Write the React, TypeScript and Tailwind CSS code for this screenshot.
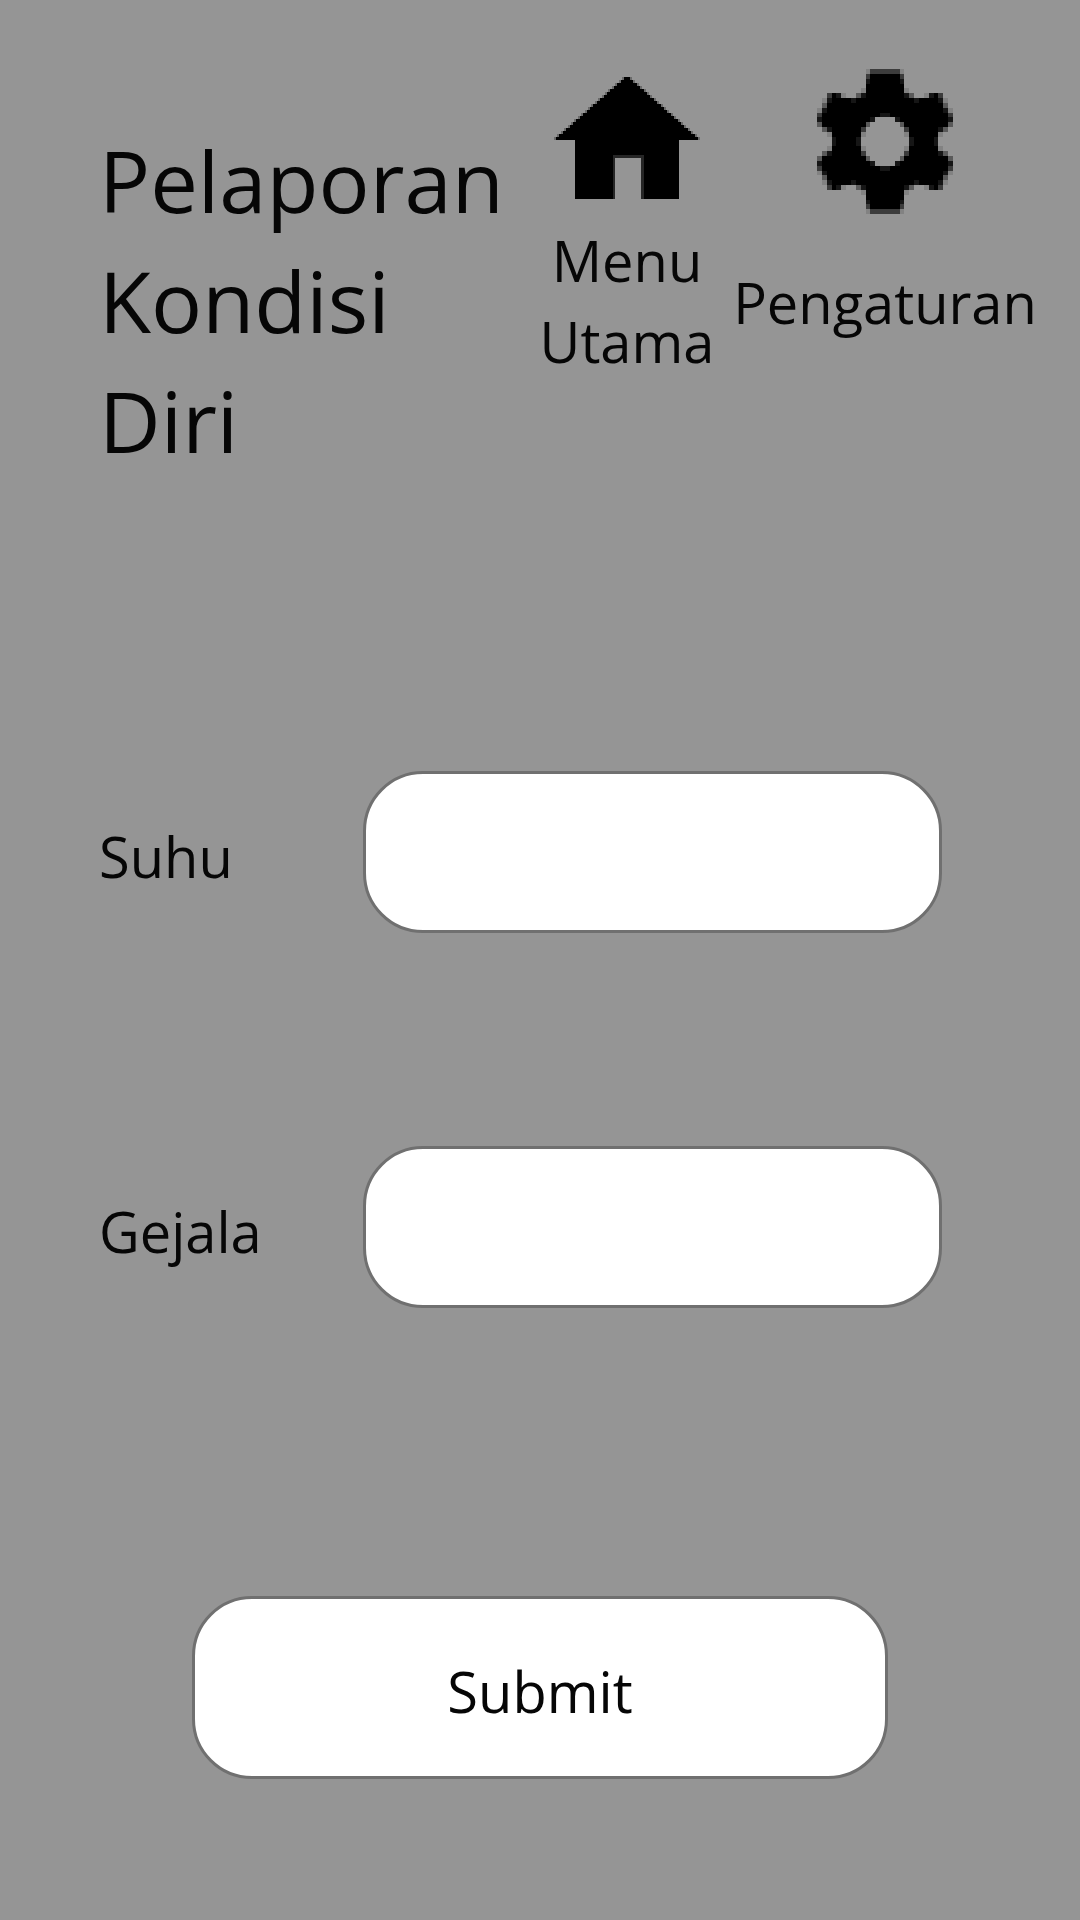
import React from "react";

// Upper-left quarter of the gear; it is mirrored across both axes.
const GEAR_QUARTER = [
  "..........lmmm",
  "..........m###",
  "..........d###",
  "..........####",
  ".........l####",
  "..m#dl..gd####",
  ".ld####d######",
  ".g############",
  "ld############",
  "m############d",
  "d##########d..",
  "g#########g...",
  ".gd######m....",
  "..l######l....",
  "...d####d.....",
];

const SHADES: Record<string, string> = {
  "#": "#000000",
  d: "#161616",
  m: "#3c3c3c",
  g: "#5a5a5a",
  l: "#828282",
};

const gearTop = GEAR_QUARTER.map((row) => row + row.split("").reverse().join(""));
const GEAR = [...gearTop, ...gearTop.slice().reverse()];

function GearIcon() {
  return (
    <svg
      viewBox="0 0 28 30"
      preserveAspectRatio="none"
      shapeRendering="crispEdges"
      className="h-[145px] w-[136px]"
      aria-hidden="true"
    >
      {GEAR.flatMap((row, y) =>
        row.split("").map((c, x) =>
          c === "." ? null : <rect key={`${x}-${y}`} x={x} y={y} width={1} height={1} fill={SHADES[c]} />,
        ),
      )}
    </svg>
  );
}

function HomeIcon() {
  const rows = Array.from({ length: 21 }, (_, i) => i);
  return (
    <svg viewBox="0 0 148 126" shapeRendering="crispEdges" className="h-[126px] w-[148px]" aria-hidden="true">
      {rows.map((i) => {
        const half = Math.round(3 + i * 3.4);
        return (
          <g key={i}>
            <rect x={72 - half} y={4 + i * 3} width={(half + 2) * 2} height={3} fill="#6a6a6a" />
            <rect x={74 - half} y={4 + i * 3} width={half * 2} height={3} fill="#000000" />
          </g>
        );
      })}
      <path d="M22 66H126V126H90V83H61V126H22Z" fill="#000000" />
      <path d="M60 126V82H91V126H88V85H62V126Z" fill="#262626" />
    </svg>
  );
}

function Field({ id, label }: { id: string; label: string }) {
  return (
    <div className="flex items-center">
      <label htmlFor={id} className="w-[264px] shrink-0 pt-2">
        {label}
      </label>
      <input
        id={id}
        name={id}
        type="text"
        className="h-[162px] min-w-0 flex-1 rounded-[60px] border-3 border-[#707070] bg-white px-12 outline-none"
      />
    </div>
  );
}

export default function App() {
  return (
    <div className="min-h-screen bg-[#959595] font-['Open_Sans','Noto_Sans',sans-serif] text-[56px] leading-[81px] text-[#060606]">
      <header className="flex items-start justify-between pt-[69px] pr-[43px] pl-[99px]">
        <h1 className="mt-[51px] max-w-[410px] text-[85px] leading-[120px]">Pelaporan Kondisi Diri</h1>
        <nav className="flex shrink-0 items-start gap-[18px]">
          <button type="button" className="flex w-44 flex-col items-center pt-1">
            <HomeIcon />
            <span className="mt-[21px]">Menu Utama</span>
          </button>
          <button type="button" className="flex w-[304px] flex-col items-center">
            <GearIcon />
            <span className="mt-12">Pengaturan</span>
          </button>
        </nav>
      </header>
      <form className="pt-[291px] pb-[141px]" onSubmit={(e) => e.preventDefault()}>
        <div className="flex flex-col gap-[213px] pr-[138px] pl-[99px]">
          <Field id="suhu" label="Suhu" />
          <Field id="gejala" label="Gejala" />
        </div>
        <div className="mt-[288px] px-[192px]">
          <button
            type="submit"
            className="h-[183px] w-full rounded-[60px] border-3 border-[#707070] bg-white pt-2"
          >
            Submit
          </button>
        </div>
      </form>
    </div>
  );
}
